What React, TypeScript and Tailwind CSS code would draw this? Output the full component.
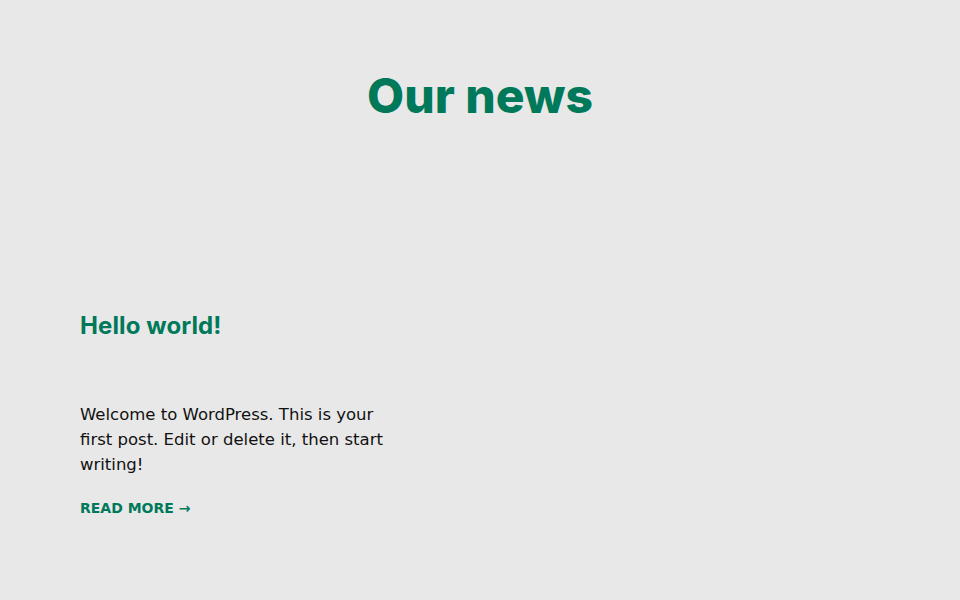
export default function App() {
  return (
    <div className="min-h-[600px] w-full bg-[#e8e8e8] overflow-hidden" style={{ fontFamily: '"DejaVu Sans", sans-serif' }}>
      <div className="pt-[66px] flex justify-center">
        <h1 className="text-[48px] leading-[60px] font-extrabold tracking-[0px] text-[#00795b]" style={{ fontFamily: 'Inter, sans-serif' }}>Our news</h1>
      </div>
      <div className="ml-[80px] pt-[185px] w-[330px]">
        <h2 className="text-[24px] leading-[30px] font-bold tracking-[0.1px] text-[#00795b]" style={{ fontFamily: 'Inter, sans-serif' }}>Hello world!</h2>
        <p className="mt-[61px] text-[16.5px] leading-[25px] text-[#111]">Welcome to WordPress. This is your first post. Edit or delete it, then start writing!</p>
        <a className="mt-[21px] block text-[14px] leading-[20px] font-bold text-[#00795b]">READ MORE →</a>
      </div>
    </div>
  );
}
